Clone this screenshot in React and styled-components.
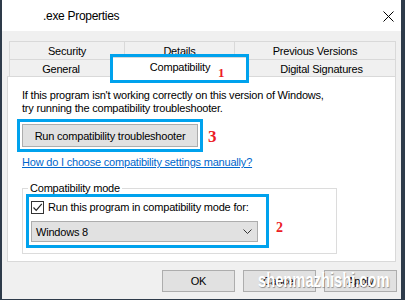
import styled, { createGlobalStyle } from 'styled-components'

const GlobalStyle = createGlobalStyle`
    html, body {
        margin: 0;
        padding: 0;
        background: #2e3b4a;
    }
    body {
        font-family: "Liberation Sans", Arial, sans-serif;
        font-size: 11px;
        letter-spacing: -0.2px;
        color: #000;
    }
`

const Desktop = styled.div`
    position: relative;
    width: 405px;
    height: 300px;
    padding-left: 2px;
    box-sizing: border-box;
    overflow: hidden;
`

const Window = styled.div`
    width: 399px;
    height: 299px;
    background: #f0f0f0;
    display: flex;
    flex-direction: column;
`

const TitleBar = styled.div`
    height: 31px;
    flex: none;
    background: #fff;
    display: flex;
    align-items: center;
    justify-content: space-between;
    padding: 0 7px 0 41px;
`

const Title = styled.span`
    font-size: 12px;
    letter-spacing: -0.3px;
`

const CloseIcon = styled.svg`
    width: 11px;
    height: 11px;
    margin-top: 1px;
`

const Content = styled.div`
    padding: 10px 5px 0 5px;
    display: flex;
    flex-direction: column;
`

const TabStrip = styled.div`
    display: flex;
    flex-direction: column;
    padding-left: 2px;
    position: relative;
    z-index: 1;
`

const TabRow = styled.div`
    display: flex;
    height: ${p => p.$height}px;
`

const Tab = styled.div`
    width: ${p => p.$width}px;
    box-sizing: border-box;
    border: 1px solid #d9d9d9;
    border-bottom: none;
    margin-right: -1px;
    background: #f0f0f0;
    display: flex;
    align-items: center;
    justify-content: center;
    padding-top: 1px;
`

const ActiveTab = styled.div`
    position: relative;
    width: ${p => p.$width}px;
    box-sizing: border-box;
    margin-top: -2px;
    height: 20px;
    border: 1px solid #d9d9d9;
    border-bottom: none;
    background: #fff;
    display: flex;
    justify-content: center;
    padding-top: 3px;
    margin-right: -1px;
    z-index: 2;

    &::after {
        content: '';
        position: absolute;
        top: -4px;
        left: -3px;
        right: -2px;
        bottom: -6px;
        border: 3px solid #00a2ed;
    }
`

const Marker = styled.span`
    position: absolute;
    font-family: "Liberation Serif", "Times New Roman", serif;
    font-weight: bold;
    letter-spacing: 0;
    color: #ec1c24;
    font-size: ${p => p.$size}px;
    line-height: 1;
    left: ${p => p.$left}px;
    top: ${p => p.$top}px;
`

const Panel = styled.div`
    height: 186px;
    box-sizing: border-box;
    background: #fff;
    border: 1px solid #d9d9d9;
    padding: 12px 14px 0 14px;
    display: flex;
    flex-direction: column;
    align-items: flex-start;
`

const Intro = styled.p`
    margin: 0;
    line-height: 13px;
`

const Highlight = styled.div`
    position: relative;
    display: flex;
    flex-direction: column;
    border: 3px solid #00a2ed;
`

const ButtonFrame = styled(Highlight)`
    margin: 4px 0 0 -5px;
    padding: 2px;
`

const Button = styled.button`
    font: inherit;
    letter-spacing: inherit;
    color: #000;
    height: ${p => p.$height || 23}px;
    width: ${p => p.$width}px;
    background: #e1e1e1;
    border: 1px solid #adadad;
    padding: 0;
    margin: 0;
`

const HelpLink = styled.a`
    margin-top: 4px;
    line-height: 13px;
    color: #0066cc;
    text-decoration: underline;
`

const GroupBox = styled.fieldset`
    position: relative;
    margin: 13px 0 0 0;
    padding: 0 0 5px 0;
    width: 315px;
    box-sizing: border-box;
    border: 1px solid #dcdcdc;
    min-width: 0;
`

const Legend = styled.legend`
    margin-left: 5px;
    padding: 0 2px;
    line-height: 13px;
`

const ModeFrame = styled(Highlight)`
    margin: -1px 0 0 3px;
    width: 243px;
    box-sizing: border-box;
    padding: 3px 8px 3px 2px;
`

const CheckRow = styled.label`
    display: flex;
    align-items: center;
    height: 14px;
    margin-bottom: 7px;
    gap: 4px;
    white-space: nowrap;
`

const CheckBox = styled.span`
    width: 13px;
    height: 13px;
    flex: none;
    box-sizing: border-box;
    border: 1px solid #333;
    background: #fff;
    display: flex;
    align-items: center;
    justify-content: center;
`

const Select = styled.div`
    height: 21px;
    box-sizing: border-box;
    background: #e1e1e1;
    border: 1px solid #adadad;
    display: flex;
    align-items: center;
    justify-content: space-between;
    padding: 0 5px 0 4px;
`

const Footer = styled.div`
    display: flex;
    justify-content: flex-end;
    gap: 8px;
    padding: 8px 4px 0 0;
`

const Watermark = styled.div`
    position: absolute;
    left: 258px;
    top: 268px;
    font-family: "Liberation Sans", Arial, sans-serif;
    font-weight: bold;
    font-size: 21px;
    letter-spacing: 0;
    color: #fff;
    white-space: nowrap;
    transform: scaleX(0.7);
    transform-origin: left top;
    text-shadow: 1px 1px 1px rgba(0, 0, 0, 0.35);
`

const App = () => {
    return (
        <>
            <GlobalStyle />
            <Desktop>
                <Window>
                    <TitleBar>
                        <Title>.exe Properties</Title>
                        <CloseIcon viewBox="0 0 11 11">
                            <path d="M0.5 0.5 L10.5 10.5 M10.5 0.5 L0.5 10.5" stroke="#000" strokeWidth="1" />
                        </CloseIcon>
                    </TitleBar>
                    <Content>
                        <TabStrip>
                            <TabRow $height={18}>
                                <Tab $width={116}>Security</Tab>
                                <Tab $width={111}>Details</Tab>
                                <Tab $width={162}>Previous Versions</Tab>
                            </TabRow>
                            <TabRow $height={17}>
                                <Tab $width={104}>General</Tab>
                                <ActiveTab $width={136}>
                                    Compatibility
                                    <Marker $size={13} $left={105} $top={8}>1</Marker>
                                </ActiveTab>
                                <Tab $width={149}>Digital Signatures</Tab>
                            </TabRow>
                        </TabStrip>
                        <Panel>
                            <Intro>
                                If this program isn't working correctly on this version of Windows,
                                <br />
                                try running the compatibility troubleshooter.
                            </Intro>
                            <ButtonFrame>
                                <Button $width={176}>Run compatibility troubleshooter</Button>
                                <Marker $size={17} $left={188} $top={6}>3</Marker>
                            </ButtonFrame>
                            <HelpLink href="#">How do I choose compatibility settings manually?</HelpLink>
                            <GroupBox>
                                <Legend>Compatibility mode</Legend>
                                <ModeFrame>
                                    <CheckRow>
                                        <CheckBox>
                                            <svg width="11" height="11" viewBox="0 0 11 11">
                                                <path d="M1.5 5.5 L4.2 8.3 L9.8 1.8" fill="none" stroke="#222" strokeWidth="1.2" />
                                            </svg>
                                        </CheckBox>
                                        Run this program in compatibility mode for:
                                    </CheckRow>
                                    <Select>
                                        <span>Windows 8</span>
                                        <svg width="9" height="5" viewBox="0 0 9 5">
                                            <path d="M0.5 0.5 L4.5 4.5 L8.5 0.5" fill="none" stroke="#333" strokeWidth="1" />
                                        </svg>
                                    </Select>
                                    <Marker $size={14} $left={247} $top={24}>2</Marker>
                                </ModeFrame>
                            </GroupBox>
                        </Panel>
                    </Content>
                    <Footer>
                        <Button $width={73} $height={22}>OK</Button>
                        <Button $width={73} $height={22}>Cancel</Button>
                        <Button $width={73} $height={22}>Apply</Button>
                    </Footer>
                </Window>
                <Watermark>shenmazhishi.com</Watermark>
            </Desktop>
        </>
    )
}

export default App
